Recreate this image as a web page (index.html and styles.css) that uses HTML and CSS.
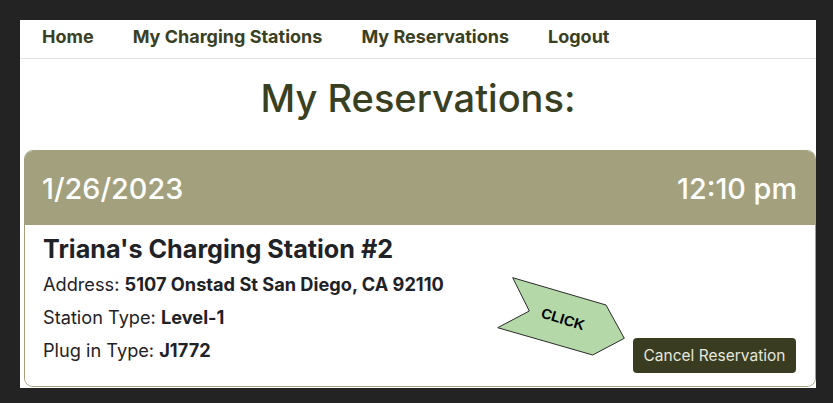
FILE: index.html
```html
<!DOCTYPE html>
<html lang="en">
<head>
<meta charset="utf-8">
<title>My Reservations</title>
<link rel="stylesheet" href="styles.css">
</head>
<body>
<div class="page">
  <nav class="nav">
    <a class="nav-link" href="#">Home</a>
    <a class="nav-link" href="#">My Charging Stations</a>
    <a class="nav-link" href="#">My Reservations</a>
    <a class="nav-link" href="#">Logout</a>
  </nav>
  <h1 class="title">My Reservations:</h1>
  <div class="card">
    <div class="card-header">
      <span class="date">1/26/2023</span>
      <span class="time">12:10 pm</span>
    </div>
    <div class="card-body">
      <div class="info">
        <h2 class="station">Triana's Charging Station #2</h2>
        <p class="line">Address: <b>5107 Onstad St San Diego, CA 92110</b></p>
        <p class="line">Station Type: <b>Level-1</b></p>
        <p class="line">Plug in Type: <b>J1772</b></p>
      </div>
      <button class="cancel">Cancel Reservation</button>
      <svg class="callout" width="134" height="84" viewBox="0 0 134 84">
        <polygon points="17.7,2.7 111,30 129.3,63.3 97.7,80 2.7,52.7 34.3,36" fill="#b4d8a8" stroke="#2a2a2a" stroke-width="1"/>
        <text x="68" y="49" transform="rotate(17 68 44)" text-anchor="middle" class="click">CLICK</text>
      </svg>
    </div>
  </div>
</div>
</body>
</html>
```
FILE: styles.css
```css
html, body {
  margin: 0;
  padding: 0;
}
body {
  background: #232323;
  padding: 20px 17px 15px 20px;
  font-family: Inter, "Liberation Sans", Arial, sans-serif;
}
.page {
  background: #ffffff;
  height: 368px;
  display: flex;
  flex-direction: column;
}
.nav {
  height: 32px;
  padding: 0 0 6px 22px;
  border-bottom: 1px solid #e2e2e8;
  display: flex;
  align-items: center;
  gap: 39px;
}
.nav-link {
  color: #3a4023;
  font-weight: 700;
  font-size: 18px;
  text-decoration: none;
}
.title {
  margin: 16px 0 0;
  text-align: center;
  font-size: 38px;
  font-weight: 500;
  color: #394022;
  line-height: 46px;
}
.card {
  margin: 29px 0 0 4px;
  border: 1px solid #a3a07e;
  border-radius: 9px;
  overflow: hidden;
  height: 235px;
  display: flex;
  flex-direction: column;
}
.card-header {
  background: #a3a07e;
  height: 74px;
  flex: none;
  display: flex;
  justify-content: space-between;
  align-items: center;
  padding: 0 18px 0 17px;
  color: #ffffff;
  font-size: 28.8px;
  font-weight: 500;
}
.card-body {
  position: relative;
  flex: 1;
  display: flex;
  justify-content: space-between;
  align-items: flex-end;
  padding: 0 19px 13px 18px;
  background: #ffffff;
}
.info {
  align-self: flex-start;
}
.station {
  margin: 9px 0 0;
  font-size: 25.2px;
  font-weight: 700;
  color: #1f2226;
  line-height: 30px;
}
.line {
  margin: 7px 0 0;
  font-size: 18.2px;
  line-height: 26px;
  color: #1f2226;
}
.line b {
  font-weight: 700;
}
.cancel {
  background: #393c20;
  color: #e6e7dd;
  border: none;
  border-radius: 4px;
  width: 163px;
  height: 35px;
  font-family: inherit;
  font-size: 15.5px;
  padding: 0;
  flex: none;
}
.callout {
  position: absolute;
  left: 470px;
  top: 50px;
}
.click {
  font-family: "Liberation Sans", Arial, sans-serif;
  font-weight: 700;
  font-size: 14.5px;
  fill: #000000;
}
```
